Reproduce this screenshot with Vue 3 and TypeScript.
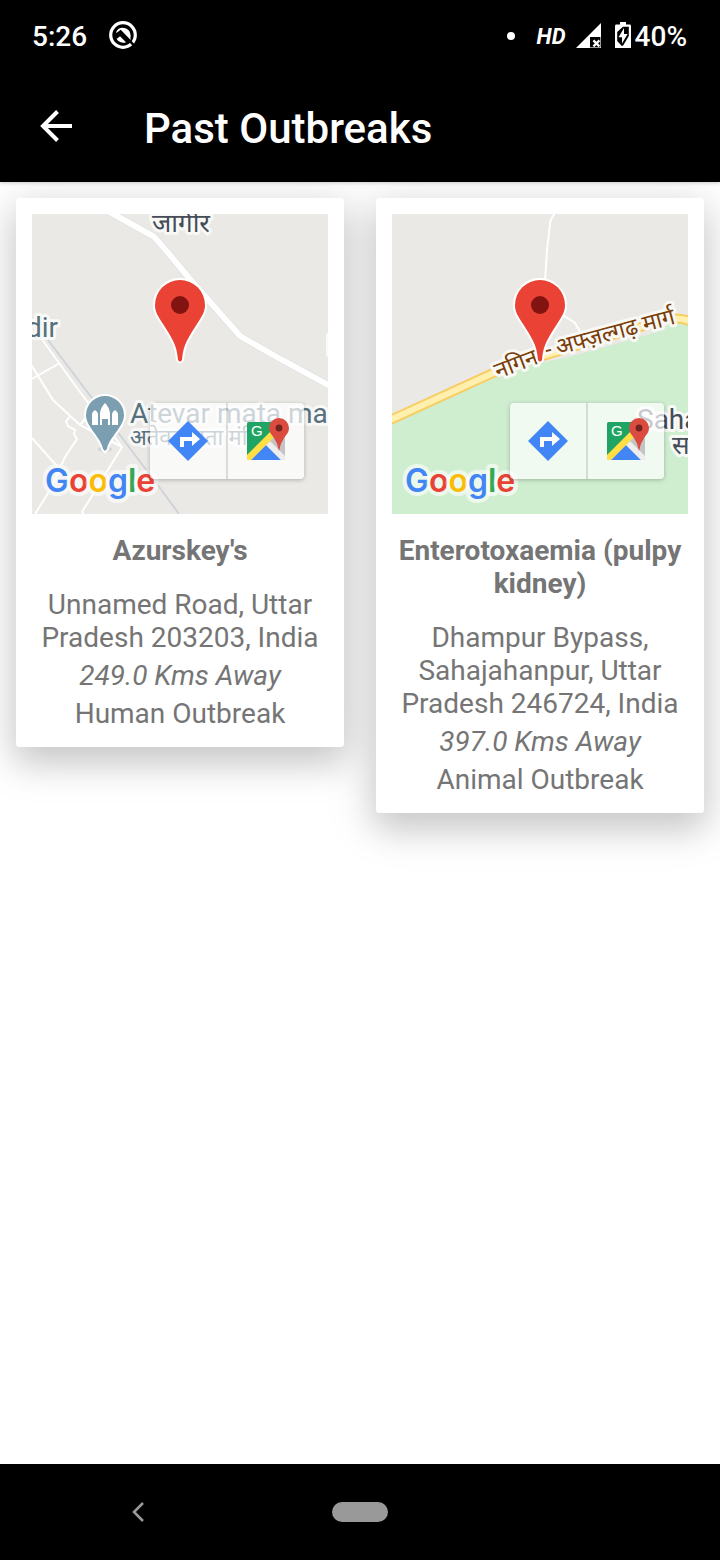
<script setup lang="ts">
interface Outbreak {
  id: string
  map: 'village' | 'highway'
  name: string
  address: string
  distance: string
  kind: string
}

const outbreaks: Outbreak[] = [
  {
    id: 'azurskeys',
    map: 'village',
    name: "Azurskey's",
    address: 'Unnamed Road, Uttar Pradesh 203203, India',
    distance: '249.0 Kms Away',
    kind: 'Human Outbreak',
  },
  {
    id: 'enterotoxaemia',
    map: 'highway',
    name: 'Enterotoxaemia (pulpy kidney)',
    address: 'Dhampur Bypass, Sahajahanpur, Uttar Pradesh 246724, India',
    distance: '397.0 Kms Away',
    kind: 'Animal Outbreak',
  },
]
</script>

<template>
  <div class="screen">
    <header class="top">
      <div class="status">
        <span class="clock">5:26</span>
        <svg class="ic-app" width="28" height="28" viewBox="0 0 28 28" aria-hidden="true">
          <circle cx="14" cy="13" r="12.3" fill="none" stroke="#fff" stroke-width="3.2" />
          <path d="M7 10.2A7.7 7.7 0 0 1 21.6 13.2L21.4 18.6L12.4 9.6L9.2 12.2Z" fill="#fff" />
          <path d="M7.6 17L11 14.2L17 20.2A7.6 7.6 0 0 1 7.6 17Z" fill="#fff" />
          <path d="M6.4 13.2L11.6 9.4L25 23.4" fill="none" stroke="#000" stroke-width="2.4" />
        </svg>
        <span class="dot"></span>
        <span class="hd">HD</span>
        <svg class="ic-signal" width="26" height="26" viewBox="0 0 26 26" aria-hidden="true">
          <path d="M0 25L25 0V25Z" fill="#fff" />
          <path d="M14 14H24.4V24.4H14Z" fill="#000" />
          <path d="M17.4 17.4L23.4 23.4M23.4 17.4L17.4 23.4" stroke="#fff" stroke-width="2.2" />
        </svg>
        <svg class="ic-battery" width="16" height="28" viewBox="0 0 16 28" aria-hidden="true">
          <path d="M5 0H11V2.6H14.5Q16 2.6 16 4V26H0V4Q0 2.6 1.5 2.6H5Z" fill="#fff" />
          <path d="M8 4.8L13.8 4.8V14L8 23.8H6.6L2.2 19V10Z" fill="#000" />
          <path d="M9 6L3.6 15.2H7V21.6L12.6 12H9Z" fill="#fff" />
        </svg>
        <span class="percent">40%</span>
      </div>
      <div class="appbar">
        <button class="back" type="button" aria-label="Back">
          <svg width="32" height="32" viewBox="0 0 32 32" aria-hidden="true">
            <path d="M32 15H3M17.5 0.5L3 15L17.5 29.5" fill="none" stroke="#fff" stroke-width="4" />
          </svg>
        </button>
        <h1>Past Outbreaks</h1>
      </div>
    </header>

    <main class="cards">
      <article v-for="item in outbreaks" :key="item.id" class="card">
        <div class="map">
          <svg
            v-if="item.map === 'village'"
            class="canvas"
            viewBox="0 0 296 300"
            preserveAspectRatio="xMidYMid slice"
          >
            <rect width="296" height="300" fill="#eae9e6" />
            <g fill="none" stroke="#fff" stroke-width="2">
              <path d="M9 124L48 178L90 233L50 298L53 302" />
              <path d="M-2 149L21 186L48 211L90 233" />
              <path d="M28 149L-2 166" />
              <path d="M38 203L34 207L36 212L43 216L42 220L45 225L33 243L18 276L3 300" />
              <path d="M0 224L31 259" />
              <path d="M48 211L58 199" />
            </g>
            <path d="M16 126L128 274L147 300" fill="none" stroke="#d0d4d8" stroke-width="2" />
            <path
              d="M74 -4L121 22Q124 24 157 64L208 122L250 146L300 173"
              fill="none"
              stroke="#dadbdd"
              stroke-width="7"
            />
            <path
              d="M74 -4L121 22Q124 24 157 64L208 122L250 146L300 173"
              fill="none"
              stroke="#fff"
              stroke-width="6"
            />
            <rect x="294" y="119" width="8" height="24" rx="2" fill="#fafafa" />
            <text class="label town hindi-lg" x="149" y="18" text-anchor="middle">जागीर</text>
            <text class="label poi" x="26" y="123" text-anchor="end">dir</text>
            <text class="label poi" x="98" y="209">Atevar mata ma</text>
            <text class="label poi hindi" x="98" y="231">अतेवर माता मंदिर</text>
            <ellipse cx="73" cy="235" rx="7" ry="3" fill="#cfd3d8" />
            <path
              d="M73 237L71 235C69 223 54 213 54 201A19 19 0 0 1 92 201C92 213 77 223 75 235Z"
              fill="#7b9eb0"
              stroke="#fff"
              stroke-width="4"
              paint-order="stroke"
            />
            <g fill="#fff">
              <path d="M60 211V200Q60 198 63 196Q66 198 66 200V211Z" />
              <path d="M80 211V200Q80 198 83 196Q86 198 86 200V211Z" />
              <path d="M68 211V199Q69 193 73 189Q77 193 78 199V211H76V205H70V211Z" />
            </g>
          </svg>

          <svg v-else class="canvas" viewBox="0 0 296 300" preserveAspectRatio="xMidYMid slice">
            <rect width="296" height="300" fill="#eae9e6" />
            <path
              d="M0 205L101 158L148 149L185 141L265 118L282 107L296 109V300H0Z"
              fill="#cfeed0"
            />
            <g fill="none" stroke="#fff" stroke-width="2">
              <path d="M163 -1Q158 6 158 10L155 36L153 68" />
              <path d="M171 101L183 109L190 121" />
            </g>
            <g fill="none">
              <path
                d="M-4 207L101 159L144 144L265 108Q284 101 300 108"
                stroke="#f8cd62"
                stroke-width="10"
              />
              <path
                d="M-4 207L101 159L144 144L265 108Q284 101 300 108"
                stroke="#fff0b0"
                stroke-width="6"
              />
            </g>
            <g class="label road">
              <text transform="translate(106 165) rotate(-21)">नगिन</text>
              <text transform="translate(155 144) rotate(-14)">-</text>
              <text transform="translate(166 141) rotate(-15)">अफ्ज़ल्गढ़ मार्ग</text>
            </g>
            <text class="label town" x="245" y="215">Saha</text>
            <text class="label town hindi-lg" x="280" y="240">स</text>
          </svg>

          <svg
            class="canvas overlay"
            viewBox="0 0 296 300"
            preserveAspectRatio="xMidYMid slice"
            role="img"
            aria-label="Outbreak location"
          >
            <path
              d="M146 146C145 130 139 123 131 110C126 102 123 98 123 91A25 25 0 0 1 173 91C173 98 170 102 165 110C157 123 151 130 150 146Q148 149 146 146Z"
              fill="#ea4335"
              stroke="#fff"
              stroke-width="4"
              paint-order="stroke"
            />
            <circle cx="148" cy="91" r="9" fill="#811411" />
            <text class="brand" x="13" y="278">
              <tspan fill="#4285f4">G</tspan><tspan fill="#ea4335">o</tspan><tspan fill="#fbbc05">o</tspan><tspan fill="#4285f4">g</tspan><tspan fill="#34a853">l</tspan><tspan fill="#ea4335">e</tspan>
            </text>
          </svg>

          <div class="tools">
            <button type="button" aria-label="Directions">
              <svg width="40" height="40" viewBox="0 0 40 40" aria-hidden="true">
                <path d="M20 0L40 20L20 40L0 20Z" fill="#4285f4" />
                <path d="M12 26V16H24V11L32 18L24 25V20H16V26Z" fill="#fff" />
              </svg>
            </button>
            <button type="button" aria-label="Open in Maps">
              <svg width="46" height="46" viewBox="-4 0 46 46" aria-hidden="true">
                <path d="M2 4H36Q38 4 38 6V40Q38 42 36 42H2Q0 42 0 40V6Q0 4 2 4Z" fill="#c4c4c4" />
                <path d="M2 4H30L24 19L0 41V6Q0 4 2 4Z" fill="#1fa463" />
                <path d="M19 27L34 42H4Z" fill="#4285f4" />
                <path d="M19 27L23 23L38 38V40Q38 42 36 42H34Z" fill="#eee" />
                <path d="M0 37L25 12L28 18L4 42H2Q0 42 0 40Z" fill="#ffdf43" />
                <text class="g" x="4" y="18">G</text>
                <path
                  d="M32 33Q31 26 27 20C24 16 22 14 22 10A10 10 0 0 1 42 10C42 14 40 16 37 20Q33 26 32 33Z"
                  fill="#db4b3f"
                />
                <circle cx="32" cy="10" r="3.4" fill="#72231f" />
              </svg>
            </button>
          </div>
        </div>
        <h2>{{ item.name }}</h2>
        <p>{{ item.address }}</p>
        <p class="distance">{{ item.distance }}</p>
        <p>{{ item.kind }}</p>
      </article>
    </main>

    <nav class="system">
      <button class="sys-back" type="button" aria-label="System back">
        <svg width="12" height="20" viewBox="0 0 12 20" aria-hidden="true">
          <path d="M11 1L2 10L11 19" fill="none" stroke="#999" stroke-width="2.6" />
        </svg>
      </button>
      <button class="home" type="button" aria-label="Home"></button>
      <span></span>
    </nav>
  </div>
</template>

<style>
body {
  margin: 0;
  background: #fff;
}
</style>

<style scoped>
.screen {
  display: flex;
  flex-direction: column;
  min-height: 100vh;
  background: #fff;
  font-family: Roboto, "Noto Sans", sans-serif;
}

button {
  display: flex;
  align-items: center;
  justify-content: center;
  margin: 0;
  padding: 0;
  border: 0;
  background: none;
}

svg {
  display: block;
  overflow: visible;
}

.top {
  position: relative;
  z-index: 1;
  background: #000;
  color: #fff;
  box-shadow: 0 1px 4px rgba(0, 0, 0, 0.2);
}

.status {
  display: flex;
  align-items: center;
  height: 72px;
  padding: 0 33px 0 32px;
  font-size: 28px;
  font-weight: 500;
}

.clock {
  margin-right: 22px;
}

.dot {
  width: 8px;
  height: 8px;
  margin-left: auto;
  border-radius: 50%;
  background: #fff;
}

.hd {
  margin: 0 10px 0 22px;
  font-size: 22px;
  font-style: italic;
  font-weight: 700;
}

.ic-battery {
  margin: 0 4px 0 13px;
}

.appbar {
  display: flex;
  align-items: center;
  height: 110px;
  padding: 0 40px;
}

.back {
  margin-right: 72px;
}

h1 {
  margin: 0;
  padding-top: 2px;
  font-size: 42px;
  font-weight: 500;
}

.cards {
  display: grid;
  flex: 1;
  grid-template-columns: 1fr 1fr;
  align-items: start;
  gap: 32px;
  padding: 16px;
  isolation: isolate;
}

.card {
  position: relative;
  padding: 16px 16px 17px;
  border-radius: 4px;
  background: #fff;
  color: #757575;
  font-size: 28px;
  line-height: 33px;
  text-align: center;
}

/* Kept beneath every card, so that no shadow tints the neighbouring card. */
.card::before {
  content: "";
  position: absolute;
  inset: 0;
  z-index: -1;
  border-radius: 4px;
  box-shadow: 0 16px 32px rgba(0, 0, 0, 0.14), 0 8px 48px 8px rgba(0, 0, 0, 0.1);
}

.map {
  position: relative;
  height: 300px;
  margin-bottom: 20px;
  overflow: hidden;
}

.canvas {
  width: 100%;
  height: 100%;
}

.overlay {
  position: absolute;
  inset: 0;
}

.label {
  fill: #454c57;
  stroke: #f8f8f7;
  stroke-width: 6px;
  stroke-linejoin: round;
  paint-order: stroke;
  font-size: 28px;
}

.poi {
  fill: #56707d;
}

.hindi {
  font-size: 22px;
}

.hindi-lg {
  font-size: 26px;
}

.road {
  fill: #7a3d06;
  font-size: 23px;
}

.brand {
  stroke: rgba(255, 255, 255, 0.6);
  stroke-width: 8px;
  stroke-linejoin: round;
  paint-order: stroke;
  font-family: Inter, sans-serif;
  font-size: 32px;
  font-weight: 600;
}

.tools {
  position: absolute;
  right: 24px;
  bottom: 35px;
  display: flex;
  gap: 2px;
  border-radius: 4px;
  background: rgba(255, 255, 255, 0.7);
  box-shadow: 0 1px 4px rgba(0, 0, 0, 0.25);
}

.tools button {
  width: 76px;
  height: 76px;
}

.tools button + button {
  box-shadow: -2px 0 0 rgba(0, 0, 0, 0.12);
}

.g {
  fill: #fff;
  font-size: 15px;
  font-weight: 500;
}

h2 {
  margin: 0 0 21px;
  font-size: 28px;
  font-weight: 700;
}

p {
  margin: 0;
}

p + p {
  margin-top: 5px;
}

.distance {
  font-style: italic;
}

.system {
  display: grid;
  grid-template-columns: 1fr 56px 1fr;
  align-items: center;
  height: 96px;
  background: #000;
}

.sys-back {
  justify-self: center;
  width: 96px;
  height: 96px;
  margin-right: 56px;
}

.home {
  width: 56px;
  height: 20px;
  border-radius: 10px;
  background: #999;
}
</style>
